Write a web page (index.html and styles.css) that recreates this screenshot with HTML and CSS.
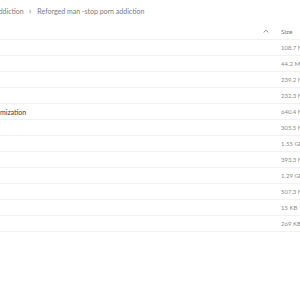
FILE: index.html
```html
<!DOCTYPE html>
<html lang="en">
	<head>
		<meta charset="UTF-8" />
		<meta name="viewport" content="width=device-width, initial-scale=1.0" />
		<title>Files</title>
		<link rel="stylesheet" href="styles.css">
	</head>
	<body>
		<div class="breadcrumb">
			<span class="crumb first">Addiction</span>
			<span class="sep">&#8250;</span>
			<span class="crumb">Reforged man -stop porn addiction</span>
		</div>

		<div class="file-list">
			<div class="row head">
				<div class="name"></div>
				<div class="sort">
					<svg width="6" height="4" viewBox="0 0 6 4"><path d="M0.8 3.4 L3 1.2 L5.2 3.4" fill="none" stroke="#8a8a8a" stroke-width="1"/></svg>
				</div>
				<div class="size">Size</div>
			</div>
			<div class="row"><div class="name"></div><div class="sort"></div><div class="size">108.7 MB</div></div>
			<div class="row"><div class="name"></div><div class="sort"></div><div class="size">44.2 MB</div></div>
			<div class="row"><div class="name"></div><div class="sort"></div><div class="size">239.2 MB</div></div>
			<div class="row"><div class="name"></div><div class="sort"></div><div class="size">232.3 MB</div></div>
			<div class="row"><div class="name">mization</div><div class="sort"></div><div class="size">640.4 MB</div></div>
			<div class="row"><div class="name"></div><div class="sort"></div><div class="size">305.5 MB</div></div>
			<div class="row"><div class="name"></div><div class="sort"></div><div class="size">1.55 GB</div></div>
			<div class="row"><div class="name"></div><div class="sort"></div><div class="size">393.3 MB</div></div>
			<div class="row"><div class="name"></div><div class="sort"></div><div class="size">1.29 GB</div></div>
			<div class="row"><div class="name"></div><div class="sort"></div><div class="size">507.3 MB</div></div>
			<div class="row"><div class="name"></div><div class="sort"></div><div class="size">15 KB</div></div>
			<div class="row"><div class="name"></div><div class="sort"></div><div class="size">269 KB</div></div>
		</div>
	</body>
</html>
```

FILE: styles.css
```css
/* General styling */
body {
	font-family: Lato, "Liberation Sans", sans-serif;
	margin: 0;
	padding: 0;
	width: 300px;
	height: 300px;
	overflow: hidden;
	background-color: #fff;
	color: #444;
}

/* Breadcrumb */
.breadcrumb {
	display: flex;
	align-items: center;
	height: 21px;
	margin-left: -6px;
	font-size: 7px;
	color: #7a7a7a;
	white-space: nowrap;
}
.sep {
	margin: 0 6px 0 5px;
	font-size: 9px;
	font-weight: bold;
	color: #9a9a9a;
}

/* File list */
.file-list {
	width: 100%;
}
.row {
	display: flex;
	align-items: center;
	height: 16px;
	border-bottom: 1px solid #f1f1f1;
	box-sizing: border-box;
	white-space: nowrap;
}
.row.head {
	height: 19px;
	padding-top: 2px;
}
.name {
	flex: 1;
	font-size: 7px;
	color: #3a3a3a;
	overflow: hidden;
}
.sort {
	width: 18px;
	display: flex;
	align-items: center;
}
.size {
	width: 19px;
	font-size: 6px;
	color: #8c8c8c;
	overflow: visible;
}
.row.head .size {
	font-size: 6.5px;
	color: #777;
}
```
